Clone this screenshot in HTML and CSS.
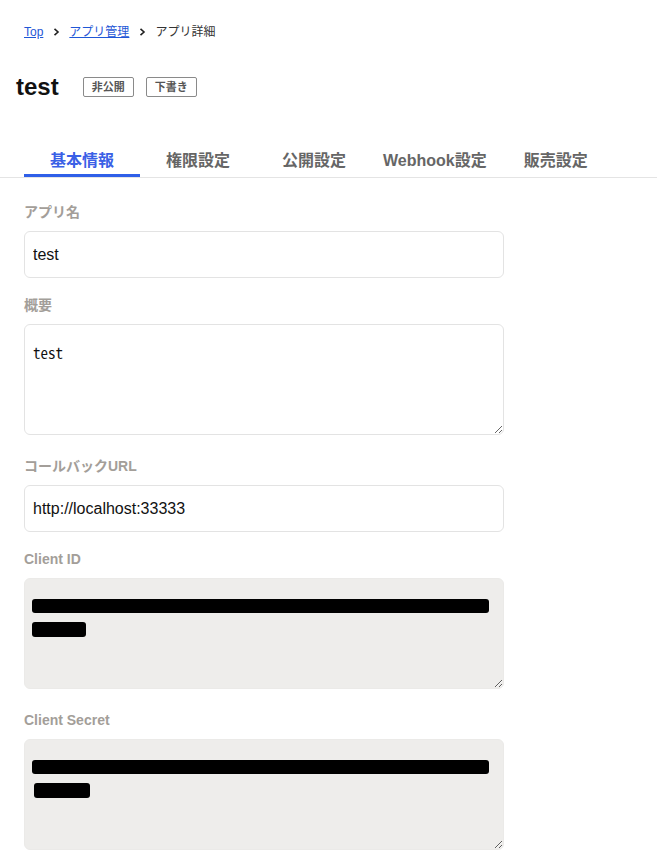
FILE: index.html
```html
<!DOCTYPE html>
<html lang="ja">
<head>
<meta charset="utf-8">
<title>アプリ詳細</title>
<link rel="stylesheet" href="styles.css">
</head>
<body>
<nav class="breadcrumb">
  <a class="crumb-link" href="#">Top</a>
  <svg class="chev" width="8" height="8" viewBox="0 0 8 8"><path d="M2.5 0.8 L6 4 L2.5 7.2" fill="none" stroke="#222" stroke-width="1.6"/></svg>
  <a class="crumb-link" href="#">アプリ管理</a>
  <svg class="chev" width="8" height="8" viewBox="0 0 8 8"><path d="M2.5 0.8 L6 4 L2.5 7.2" fill="none" stroke="#222" stroke-width="1.6"/></svg>
  <span class="crumb-current">アプリ詳細</span>
</nav>

<header class="title-row">
  <h1 class="title">test</h1>
  <span class="badge">非公開</span>
  <span class="badge">下書き</span>
</header>

<div class="tabs">
  <a class="tab active" href="#">基本情報</a>
  <a class="tab" href="#">権限設定</a>
  <a class="tab" href="#">公開設定</a>
  <a class="tab" href="#">Webhook設定</a>
  <a class="tab" href="#">販売設定</a>
</div>

<form class="form">
  <div class="field">
    <label class="label">アプリ名</label>
    <input class="input" type="text" value="test">
  </div>
  <div class="field field-area">
    <label class="label">概要</label>
    <textarea class="textarea">test</textarea>
  </div>
  <div class="field">
    <label class="label">コールバックURL</label>
    <input class="input" type="text" value="http://localhost:33333">
  </div>
  <div class="field field-area">
    <label class="label">Client ID</label>
    <div class="textarea readonly">
      <span class="redact redact-long"></span>
      <span class="redact redact-short"></span>
    </div>
  </div>
  <div class="field field-area">
    <label class="label">Client Secret</label>
    <div class="textarea readonly">
      <span class="redact redact-long"></span>
      <span class="redact redact-short2"></span>
    </div>
  </div>
</form>
</body>
</html>
```
FILE: styles.css
```css
* { box-sizing: border-box; }

body {
  margin: 0;
  background: #fff;
  font-family: "Liberation Sans", "Noto Sans CJK JP", sans-serif;
  color: #222;
}

.breadcrumb {
  display: flex;
  align-items: center;
  gap: 9px;
  padding: 22px 0 0 24px;
  height: 42px;
  font-size: 12px;
  line-height: 20px;
}

.crumb-link {
  color: #1f57d6;
  text-decoration: underline;
}

.crumb-current { color: #333; }

.chev { display: block; }

.title-row {
  display: flex;
  align-items: center;
  padding-left: 16px;
  margin-top: 30px;
  height: 30px;
}

.title {
  margin: 0 24px 0 0;
  font-size: 24px;
  line-height: 30px;
  font-weight: 700;
  color: #111;
}

.badge {
  height: 20px;
  line-height: 18px;
  padding: 0 8px;
  border: 1px solid #8a8a8a;
  border-radius: 2px;
  font-size: 11px;
  font-weight: 700;
  color: #555;
  margin-right: 12px;
}

.tabs {
  display: flex;
  margin-top: 43px;
  padding-left: 24px;
  border-bottom: 1px solid #e4e4e4;
}

.tab {
  min-width: 116px;
  padding: 2px 11px 0;
  height: 32px;
  line-height: 27px;
  text-align: center;
  font-size: 16px;
  font-weight: 700;
  color: #666;
  text-decoration: none;
  border-bottom: 3px solid transparent;
}

.tab.active {
  color: #3a60e6;
  border-bottom-color: #2f5fe8;
}

.form {
  display: flex;
  flex-direction: column;
  gap: 17px;
  padding: 24px 0 0 24px;
}

.field {
  display: flex;
  flex-direction: column;
}

.field-area { margin-bottom: 4px; }

.label {
  font-size: 14px;
  line-height: 20px;
  font-weight: 700;
  color: #a39e99;
  margin-bottom: 9px;
}

.input {
  width: 480px;
  height: 47px;
  padding: 0 8px;
  border: 1px solid #e3e3e3;
  border-radius: 6px;
  font-family: "Liberation Sans", "Noto Sans CJK JP", sans-serif;
  font-size: 16px;
  color: #111;
  background: #fff;
  outline: none;
}

.textarea {
  display: block;
  width: 480px;
  height: 111px;
  padding: 16px 8px;
  border: 1px solid #e3e3e3;
  border-radius: 6px;
  font-family: "Noto Sans Mono CJK JP", "Liberation Mono", monospace;
  font-size: 15px;
  font-weight: 300;
  line-height: 23px;
  color: #111;
  background: #fff;
  resize: both;
  overflow: hidden;
  outline: none;
}

.readonly {
  background: #eeedeb;
  border-color: #ebeae8;
}

.redact {
  display: block;
  background: #000;
  border-radius: 3px;
  height: 14px;
  margin: 4px 0 9px -1px;
}

.redact-long { width: 457px; }
.redact-short { width: 54px; height: 15px; }
.redact-short2 { width: 56px; height: 15px; margin-left: 1px; }
```
